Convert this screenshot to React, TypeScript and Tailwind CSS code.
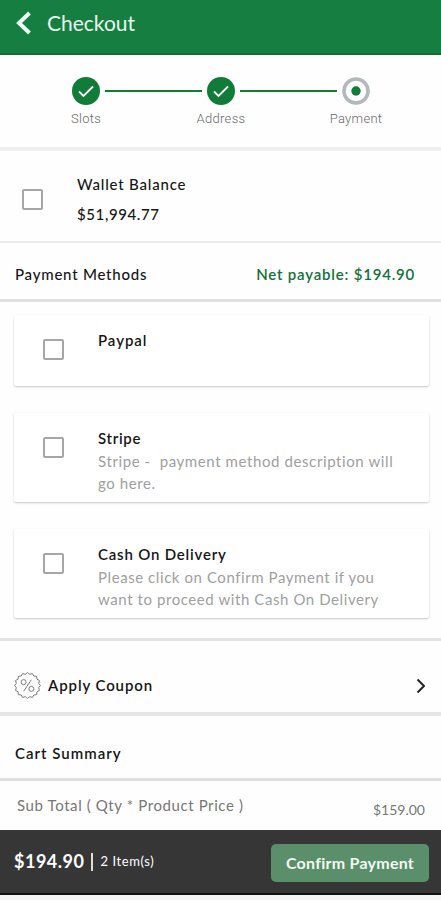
import type { ReactNode } from 'react';

const badgePoints = Array.from({ length: 32 }, (_, i) => {
  const r = i % 2 === 0 ? 13.4 : 11.8;
  const a = (i * Math.PI) / 16;
  return `${(14 + r * Math.cos(a)).toFixed(2)},${(14 + r * Math.sin(a)).toFixed(2)}`;
}).join(' ');

const methods: { title: string; titleClass: string; height: string; lines: { text: string; className: string }[] }[] = [
  { title: 'Paypal', titleClass: 'tracking-[0.95px]', height: 'h-[71px] mb-[27px]', lines: [] },
  {
    title: 'Stripe',
    titleClass: 'tracking-[0.7px]',
    height: 'h-[89px] mb-[27px]',
    lines: [
      { text: 'Stripe -  payment method description will', className: 'tracking-[0.6px]' },
      { text: 'go here.', className: 'tracking-[0.6px]' },
    ],
  },
  {
    title: 'Cash On Delivery',
    titleClass: 'tracking-[0.8px]',
    height: 'h-[89px] mb-[20px]',
    lines: [
      { text: 'Please click on Confirm Payment if you', className: 'tracking-[0.57px]' },
      { text: 'want to proceed with Cash On Delivery', className: 'tracking-[0.58px]' },
    ],
  },
];

const Checkbox = () => (
  <span role="checkbox" aria-checked="false" className="block size-[21px] shrink-0 rounded-[2px] border-2 border-[#a6a6a6] bg-white" />
);

const DoneIcon = () => (
  <svg className="size-7" viewBox="0 0 28 28" fill="none">
    <circle cx="14" cy="14" r="14" fill="#117c38" />
    <path d="M7 14.500l4.500 4.500 9.500-9.500" stroke="#fff" strokeWidth="1.8" />
  </svg>
);

const CurrentIcon = () => (
  <svg className="size-7" viewBox="0 0 28 28" fill="none">
    <circle cx="14" cy="14" r="12" stroke="#b3b8bb" strokeWidth="3.6" />
    <circle cx="14" cy="14" r="4.7" fill="#117c38" />
  </svg>
);

const Step = ({ label, children }: { label: string; children: ReactNode }) => (
  <div className="flex w-7 flex-col items-center">
    {children}
    <span className="mt-[5px] whitespace-nowrap font-[Roboto] text-[13px] leading-[18px] font-light tracking-[0.3px] text-[#6b6b6b]">{label}</span>
  </div>
);

const App = () => {
  return (
    <div className="flex h-[900px] w-[441px] flex-col overflow-hidden bg-[#f5f5f5] font-[Lato,sans-serif] text-[15px] text-[#161616]">
      <header className="flex h-[55px] shrink-0 items-center border-b-2 border-[#107034] bg-[#167e40] pb-[7px] pl-4">
        <svg className="h-6 w-4" viewBox="0 0 16 24" fill="none">
          <path d="M13.5 2L3 12l10.500 10" stroke="#eefaf1" strokeWidth="4" />
        </svg>
        <h1 className="ml-[15px] text-[21px] leading-6 text-[#e9f7ec]">Checkout</h1>
      </header>

      <main className="flex h-[775px] shrink-0 flex-col overflow-hidden bg-[#fefefe]">
        <section className="flex h-24 shrink-0 justify-center border-b-4 border-[#efefef] pt-[22px] pl-px">
          <Step label="Slots"><DoneIcon /></Step>
          <div className="mx-[5px] mt-[13px] h-[2px] w-[97px] bg-[#117c38]" />
          <Step label="Address"><DoneIcon /></Step>
          <div className="mx-[5px] mt-[13px] h-[2px] w-[97px] bg-[#117c38]" />
          <Step label="Payment"><CurrentIcon /></Step>
        </section>

        <section className="flex h-[92px] shrink-0 items-start border-b-2 border-[#ececec] pl-[22px]">
          <div className="mt-[38px]"><Checkbox /></div>
          <div className="mt-[18px] ml-[34px] leading-[30px] font-medium">
            <p className="tracking-[0.8px]">Wallet Balance</p>
            <p className="tracking-[0.6px]">$51,994.77</p>
          </div>
        </section>

        <section className="flex h-[59px] shrink-0 items-center justify-between border-b-[3px] border-[#e0e0e0] pt-[7px] pr-[26px] pl-[15px]">
          <h2 className="font-medium tracking-[0.77px]">Payment Methods</h2>
          <p className="font-semibold tracking-[0.8px] text-[#11713a]">Net payable: $194.90</p>
        </section>

        <section className="shrink-0 border-b-[3px] border-[#e3e3e3] pt-[13px] pr-3 pl-[14px]">
          {methods.map((method) => (
            <div
              key={method.title}
              className={`flex rounded-[2px] bg-white pl-[29px] shadow-[0_1px_2px_rgba(0,0,0,0.22)] ${method.height}`}
            >
              <div className="mt-[24px]"><Checkbox /></div>
              <div className="mt-[13px] ml-[34px] whitespace-pre">
                <h3 className={`leading-6 font-semibold ${method.titleClass}`}>{method.title}</h3>
                {method.lines.map((line) => (
                  <p key={line.text} className={`leading-[22px] text-[#a0a0a0] ${line.className}`}>{line.text}</p>
                ))}
              </div>
            </div>
          ))}
        </section>

        <section className="flex h-[75px] shrink-0 items-center border-b-4 border-[#e6e6e6] pt-[18px] pr-[15px] pl-[14px]">
          <svg className="size-[27px]" viewBox="0 0 28 28" fill="none" stroke="#777" strokeWidth="1">
            <polygon points={badgePoints} strokeLinejoin="round" />
            <circle cx="10" cy="10.5" r="2.6" />
            <circle cx="18" cy="17.5" r="2.6" />
            <path d="M18 8l-8 12" />
          </svg>
          <h2 className="ml-[7px] font-semibold tracking-[0.9px]">Apply Coupon</h2>
          <svg className="ml-auto h-4 w-[10px]" viewBox="0 0 10 16" fill="none">
            <path d="M1.5 1.5L8 8l-6.500 6.500" stroke="#222" strokeWidth="2" />
          </svg>
        </section>

        <section className="flex h-[65px] shrink-0 items-center border-b-[3px] border-[#dfdfdf] pt-3 pl-[15px]">
          <h2 className="font-semibold tracking-[1px]">Cart Summary</h2>
        </section>

        <section className="flex h-[49px] shrink-0 justify-between pr-4 pl-[17px] text-[#777]">
          <p className="mt-[13px] leading-[22px] tracking-[0.6px]">Sub Total ( Qty * Product Price )</p>
          <p className="mt-[18px] text-[14px] leading-[22px]">$159.00</p>
        </section>
      </main>

      <footer className="flex h-[65px] shrink-0 items-center border-b-2 border-[#111] bg-[#363636] pr-3 pl-[14px] text-white">
        <span className="text-[18px] font-bold tracking-[0.5px]">$194.90</span>
        <span className="mr-[7px] ml-[7px] h-[18px] w-[2px] bg-[#ddd]" />
        <span className="mt-px text-[13px] tracking-[0.6px]">2 Item(s)</span>
        <button className="ml-auto mt-[3px] h-[38px] w-[158px] rounded-[5px] bg-[#5b8f6b] text-[16px] font-bold tracking-[0.25px] text-[#f0faf1]">
          Confirm Payment
        </button>
      </footer>
    </div>
  );
};

export default App;
